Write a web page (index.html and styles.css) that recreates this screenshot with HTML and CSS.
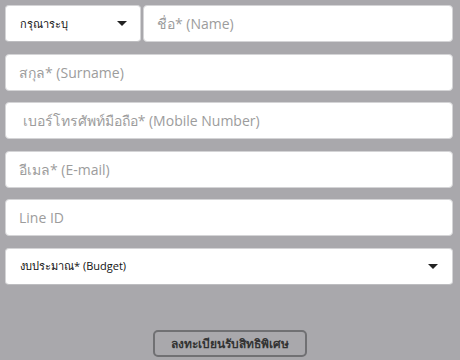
FILE: index.html
```html
<!DOCTYPE html>
<html>
  <head>
    <meta charset="utf-8" />
    <title>ลงทะเบียนรับสิทธิพิเศษ</title>
    <link rel="stylesheet" href="styles.css">
  </head>
  <body>
    <form class="register">
      <div class="row">
        <div class="select title">
          <span>กรุณาระบุ</span>
          <span class="caret"></span>
        </div>
        <input class="field" type="text" placeholder="ชื่อ* (Name)">
      </div>
      <div class="row">
        <input class="field" type="text" placeholder="สกุล* (Surname)">
      </div>
      <div class="row">
        <input class="field" type="text" placeholder=" เบอร์โทรศัพท์มือถือ* (Mobile Number)">
      </div>
      <div class="row">
        <input class="field" type="text" placeholder="อีเมล* (E-mail)">
      </div>
      <div class="row">
        <input class="field" type="text" placeholder="Line ID">
      </div>
      <div class="row">
        <div class="select budget">
          <span>งบประมาณ* (Budget)</span>
          <span class="caret"></span>
        </div>
      </div>
      <div class="actions">
        <button type="button" class="submit">ลงทะเบียนรับสิทธิพิเศษ</button>
      </div>
    </form>
  </body>
</html>
```

FILE: styles.css
```css
html, body {
    margin: 0;
    background: #a9a8ac;
    font-family: 'Open Sans', 'Noto Sans', sans-serif;
    width: 460px;
    height: 360px;
    overflow: hidden;
}
.register {
    padding: 5px 7px 0 5px;
}
.row {
    display: flex;
    gap: 2px;
    height: 37px;
    margin-bottom: 11.6px;
}
.field {
    flex: 1;
    min-width: 0;
    box-sizing: border-box;
    height: 37px;
    border: 1px solid #d4d4d6;
    border-radius: 4px;
    background: #fff;
    padding: 0 13px;
    font-family: inherit;
    font-size: 14px;
    color: #333;
    outline: none;
}
.field::placeholder {
    color: #9c9c9c;
}
.select {
    box-sizing: border-box;
    height: 37px;
    display: flex;
    align-items: center;
    justify-content: space-between;
    background: #fff;
    border: 1px solid #d4d4d6;
    border-bottom-color: #bdbdc0;
    border-radius: 4px;
    padding: 0 13px 0 14px;
    font-size: 11px;
    color: #111;
}
.select.title {
    width: 136px;
}
.select.budget {
    flex: 1;
    padding-right: 14px;
}
.caret {
    width: 0;
    height: 0;
    border-left: 5px solid transparent;
    border-right: 5px solid transparent;
    border-top: 5px solid #222;
}
.actions {
    display: flex;
    justify-content: center;
    padding-top: 33px;
    margin-left: 2px;
}
.submit {
    width: 154px;
    height: 27px;
    border: 2px solid #707073;
    border-radius: 5px;
    background: transparent;
    font-family: inherit;
    font-size: 12px;
    font-weight: bold;
    color: #333;
    padding: 0;
}
```
